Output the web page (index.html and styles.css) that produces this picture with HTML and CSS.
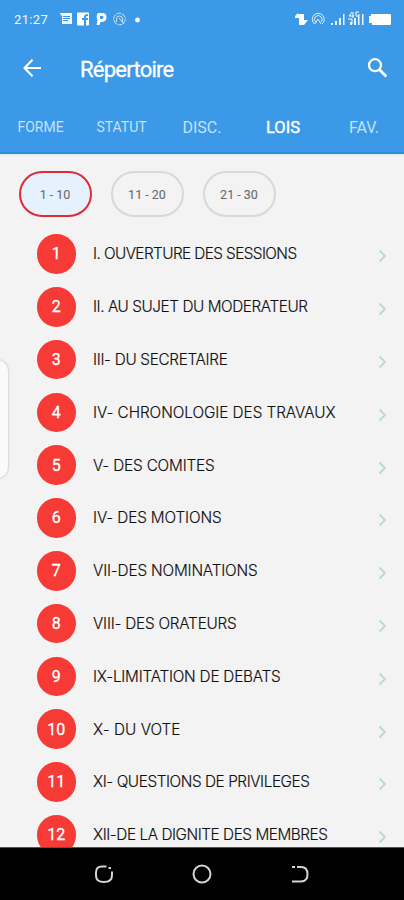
FILE: index.html
```
<!DOCTYPE html>
<html lang="fr">
<head>
<meta charset="utf-8">
<title>Répertoire</title>
<link rel="stylesheet" href="styles.css">
</head>
<body>
<div class="app">
  <header class="header">
    <div class="status">
      <span class="time">21:27</span>
      <svg class="status-left" width="84" height="16" viewBox="0 0 84 16">
        <path fill="#fff" opacity=".93" fill-rule="evenodd" d="M-1 2h13v11H2V5zM3 5v1h7V5zm0 2v1h7V7zm0 2v1h5V9z"/>
        <path fill="#fff" fill-rule="evenodd" d="M18 1.500h10q1 0 1 1v11q0 1-1 1h-2V9h2V7h-2V6q0-1 2-1V3q-4 0-4 3v1h-2v2h2v5.500h-6q-1 0-1-1v-11q0-1 1-1z"/>
        <path fill="#fff" fill-rule="evenodd" d="M38 2h4q4.500 0 4.500 4 0 5-5 5h-1l-1 3h-3l1-5q-2-4 .5-7zm2 3v3h2q1.500 0 1.500-2 0-1-1.500-1z"/>
        <g fill="none" stroke="#fff" opacity=".75"><circle cx="59.500" cy="8" r="5.800" stroke-dasharray="5 .8"/><path d="M56.500 11V8q0-3 3-3t3 3v3M59 7l5 6"/></g>
        <circle cx="77.500" cy="9" r="2.400" fill="#fff"/>
      </svg>
      <svg class="status-right" width="98" height="18" viewBox="0 0 98 18">
        <path fill="#fff" d="M1 6l3-3v1h6v6h4l-4 5H5V8H1z"/>
        <g fill="none" stroke="#fff" opacity=".85"><path d="M20.500 14a6 6 0 1 1 7.500 0M21.500 12a3.800 3.800 0 1 1 5.500 0"/><path d="M21 14l3-5 3 5"/></g>
        <path fill="#fff" opacity=".9" d="M37 13h2v2h-2zM41 11h2v4h-2zM45 8h2v7h-2zM49 4h1.500v11H49zM56 12h2v3h-2zM60 8h2v7h-2zM64 6h1.500v9H64zM68 4h1.500v11H68z"/>
        <path fill="none" stroke="#fff" d="M58 2l-3 4h5M59 2v6M65 2h-3v4h3V4M54 9h4v5"/>
        <path fill="#fff" d="M77 4h19q1 0 1 1v9q0 1-1 1H78v-2h-3V6h2z"/>
      </svg>
    </div>
    <div class="bar">
      <svg class="back" width="20" height="20" viewBox="0 0 20 20"><path d="M19 10H2.500M10.500 1.800L2.500 10l8 8.200" fill="none" stroke="#fff" stroke-width="2"/></svg>
      <h1 class="title">Répertoire</h1>
      <svg class="search" width="22" height="22" viewBox="0 0 22 22"><circle cx="9" cy="8.200" r="6" fill="none" stroke="#fff" stroke-width="2.300"/><path d="M13.300 12.500l7 7" stroke="#fff" stroke-width="2.800"/></svg>
    </div>
    <nav class="tabs">
      <span class="tab small">FORME</span><span class="tab small">STATUT</span><span class="tab">DISC.</span><span class="tab active">LOIS</span><span class="tab">FAV.</span>
    </nav>
  </header>
  <main class="content">
    <div class="chips"><span class="chip selected">1 - 10</span><span class="chip">11 - 20</span><span class="chip">21 - 30</span></div>
    <ol class="list" id="list"></ol>
    <div class="edge-handle"></div>
  </main>
  <footer class="nav">
    <svg width="20" height="20" viewBox="0 0 20 20"><path d="M12.500 2.500H8Q2 2.500 2 8.500v3Q2 18 10 18t8-7V7.500M14.500 4h2.500"/></svg>
    <svg width="20" height="20" viewBox="0 0 20 20"><circle cx="10" cy="10" r="8.500"/></svg>
    <svg width="20" height="20" viewBox="0 0 20 20"><path d="M2 3h3M7 3h4q6.500 0 6.500 7.250T11 17.500H2"/></svg>
  </footer>
</div>
<script src="list.js"></script>
</body>
</html>
```
FILE: list.js
```
const rows = [
  ["I. OUVERTURE DES SESSIONS", 203],
  ["II. AU SUJET DU MODERATEUR", 214],
  ["III- DU SECRETAIRE", 134],
  ["IV- CHRONOLOGIE DES TRAVAUX", 242],
  ["V- DES COMITES", 121],
  ["IV- DES MOTIONS", 128],
  ["VII-DES NOMINATIONS", 164],
  ["VIII- DES ORATEURS", 143],
  ["IX-LIMITATION DE DEBATS", 187],
  ["X- DU VOTE", 87],
  ["XI- QUESTIONS DE PRIVILEGES", 216],
  ["XII-DE LA DIGNITE DES MEMBRES", 234]
];
const list = document.getElementById("list");
rows.forEach(([label, width], i) => {
  const row = document.createElement("li");
  row.className = "row";
  row.innerHTML = `<span class="number">${i + 1}</span><span class="label">${label}</span>
    <svg class="chevron" width="10" height="14" viewBox="0 0 10 14"><path d="M2.500 1.500L8 7l-5.500 5.500"/></svg>`;
  list.appendChild(row);
  const text = row.querySelector(".label");
  const spacing = (width + .5 - text.getBoundingClientRect().width) / label.length;
  text.style.letterSpacing = `${spacing}px`;
});
```
FILE: styles.css
```
* { box-sizing: border-box; }
body { margin: 0; font-family: Roboto, sans-serif; }
.app { width: 404px; height: 900px; display: flex; flex-direction: column; background: #f3f3f3; overflow: hidden; }
.header { height: 154px; flex: none; background: #3c99e7; border-bottom: 2px solid #2590db; color: #fff; box-shadow: 0 1px 2px #d8e4ec; }
.status { height: 37px; padding: 0 12px 0 14px; display: flex; align-items: center; }
.time { font-size: 13px; letter-spacing: .35px; width: 46px; opacity: .93; padding-top: 2px; }
.status-right { margin-left: auto; }
.bar { height: 61px; display: flex; align-items: center; padding: 0 16px 0 22px; }
.title { margin: 3px 0 0 38px; font: 400 22px Roboto, sans-serif; letter-spacing: -.75px; -webkit-text-stroke: .3px #fff; }
.search { margin-left: auto; }
.tabs { height: 54px; display: grid; grid-template-columns: 81px 81px 80px 82px 80px; align-items: center; text-align: center; padding-top: 4px; }
.tab { font-size: 16px; color: #c3e1fa; }
.small { font-size: 14px; }
.active { color: #fff; font-size: 16.500px; -webkit-text-stroke: .4px #fff; }
.content { position: relative; flex: 1; min-height: 0; overflow: hidden; }
.chips { height: 73.600px; padding: 17px 0 0 18.500px; display: flex; gap: 19px; }
.chip { width: 73px; height: 46px; border: 2px solid #d3dada; border-radius: 23px; display: flex; align-items: center; justify-content: center; font-size: 12.500px; color: #686c6e; -webkit-text-stroke: .1px #686c6e; }
.selected { background: #e5f2fe; border-color: #de2b34; }
.list { margin: 0; padding: 0; list-style: none; }
.row { height: 52.800px; display: flex; align-items: center; padding: 0 17px 0 36.500px; }
.number { width: 39.500px; height: 39.500px; border-radius: 50%; background: #f63a35; color: #fff; display: flex; align-items: center; justify-content: center; font-size: 16px; -webkit-text-stroke: .3px #fff; flex: none; }
.label { margin-left: 17px; font: 300 15.300px Inter, sans-serif; color: #111; -webkit-text-stroke: .15px #111; white-space: nowrap; }
.chevron { margin: 5px 0 0 auto; flex: none; }
.chevron path { fill: none; stroke: #b4ddd0; stroke-width: 1.800; }
.edge-handle { position: absolute; left: -20px; top: 205px; width: 29px; height: 120px; border: 1px solid #dcdcdc; border-radius: 12px; background: #fafafa; box-shadow: 0 0 2px #ddd; }
.nav { height: 53px; flex: none; background: #000; border-top: 1px solid #555; display: flex; justify-content: center; align-items: center; gap: 78px; }
.nav svg { fill: none; stroke: #d4d4d4; stroke-width: 2; }
```
